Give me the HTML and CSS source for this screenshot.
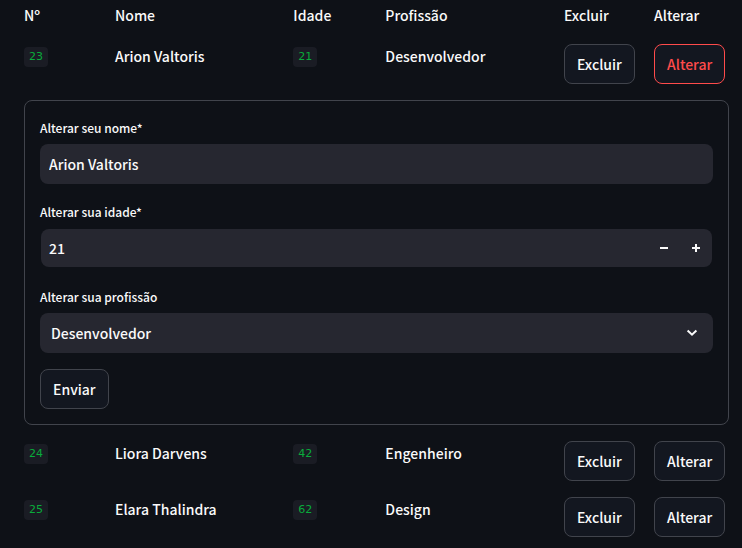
FILE: index.html
```html
<!DOCTYPE html>
<html lang="pt-BR">
<head>
<meta charset="utf-8">
<meta name="viewport" content="width=device-width, initial-scale=1">
<title>Cadastro</title>
<link rel="stylesheet" href="styles.css">
</head>
<body>
<main class="page">
  <table class="records">
    <colgroup>
      <col class="col-number"><col class="col-name"><col class="col-age"><col class="col-job"><col class="col-delete"><col class="col-edit">
    </colgroup>
    <thead>
      <tr><th>Nº</th><th>Nome</th><th>Idade</th><th>Profissão</th><th>Excluir</th><th>Alterar</th></tr>
    </thead>
    <tbody>
      <tr>
        <td><code class="badge">23</code></td><td>Arion Valtoris</td><td><code class="badge">21</code></td><td>Desenvolvedor</td>
        <td><button class="button" type="button">Excluir</button></td>
        <td><button class="button button-active" type="button">Alterar</button></td>
      </tr>
      <tr>
        <td colspan="6">
          <form class="editor">
            <div class="field">
              <label class="label" for="name">Alterar seu nome*</label>
              <input class="control" id="name" type="text" value="Arion Valtoris">
            </div>
            <div class="field">
              <label class="label" for="age">Alterar sua idade*</label>
              <div class="stepper">
                <input class="stepper-input" id="age" type="number" value="21">
                <button class="step" type="button" aria-label="Diminuir"><svg width="8" height="8" viewBox="0 0 8 8"><path d="M0 3h8v2H0z"/></svg></button>
                <button class="step" type="button" aria-label="Aumentar"><svg width="8" height="8" viewBox="0 0 8 8"><path d="M3 0h2v3h3v2H5v3H3V5H0V3h3z"/></svg></button>
              </div>
            </div>
            <div class="field">
              <label class="label" for="job">Alterar sua profissão</label>
              <div class="picker">
                <select class="control select" id="job">
                  <option selected>Desenvolvedor</option>
                  <option>Engenheiro</option>
                  <option>Design</option>
                </select>
                <svg class="chevron" width="12" height="8" viewBox="0 0 12 8" aria-hidden="true"><path d="M1.6 1.5 6 5.7l4.400-4.200"/></svg>
              </div>
            </div>
            <button class="button" type="submit">Enviar</button>
          </form>
        </td>
      </tr>
      <tr>
        <td><code class="badge">24</code></td><td>Liora Darvens</td><td><code class="badge">42</code></td><td>Engenheiro</td>
        <td><button class="button" type="button">Excluir</button></td>
        <td><button class="button" type="button">Alterar</button></td>
      </tr>
      <tr>
        <td><code class="badge">25</code></td><td>Elara Thalindra</td><td><code class="badge">62</code></td><td>Design</td>
        <td><button class="button" type="button">Excluir</button></td>
        <td><button class="button" type="button">Alterar</button></td>
      </tr>
    </tbody>
  </table>
</main>
</body>
</html>
```
FILE: styles.css
```css
* { box-sizing: border-box; }

body {
  margin: 0;
  background: #0e1117;
  color: #fafafa;
  font: 500 14px/24px "Noto Sans CJK SC", "Noto Sans", sans-serif;
}

button, input, select {
  font: inherit;
  color: inherit;
}

.page { padding: 3px 13px 0 24px; }

.records {
  width: 100%;
  table-layout: fixed;
  border-collapse: collapse;
}

.col-number { width: 91px; }
.col-name { width: 25.3%; }
.col-age { width: 92px; }
.col-job { width: auto; }
.col-delete { width: 90px; }
.col-edit { width: 75px; }

th, td {
  padding: 0 0 16px;
  text-align: left;
  vertical-align: top;
  font-weight: inherit;
  white-space: nowrap;
}

th { padding-bottom: 17px; }

.badge {
  display: block;
  width: fit-content;
  margin-top: 3px;
  padding: 0 5px;
  border-radius: 4px;
  background: #1a1c24;
  color: #09ab3b;
  font: 11px/20px "DejaVu Sans", monospace;
}

.button {
  display: block;
  height: 40px;
  padding: 0 12px;
  border: 1px solid #41444c;
  border-radius: 8px;
  background: #131720;
}

.button-active {
  border-color: #ff4b4b;
  color: #ff4b4b;
}

.editor {
  display: flex;
  flex-direction: column;
  align-items: stretch;
  gap: 16px;
  padding: 15px;
  border: 1px solid #41444c;
  border-radius: 8px;
}

.editor > .button { align-self: flex-start; }

.label {
  display: block;
  height: 28px;
  font-size: 12px;
}

.control {
  display: block;
  width: 100%;
  height: 40px;
  padding: 0 9px;
  border: 0;
  border-radius: 8px;
  background: #262730;
}

.stepper {
  display: flex;
  height: 38px;
  margin: 1px 1px 2px;
  border-radius: 8px;
  background: #262730;
}

.stepper-input {
  flex: 1;
  min-width: 0;
  padding: 0 8px;
  border: 0;
  background: none;
  appearance: textfield;
}

.stepper-input::-webkit-inner-spin-button { appearance: none; }

.step {
  display: grid;
  place-items: center;
  width: 32px;
  padding: 0;
  border: 0;
  background: none;
  fill: currentColor;
}

.picker { position: relative; }

.select {
  padding: 0 11px;
  appearance: none;
}

.chevron {
  position: absolute;
  top: 16px;
  right: 15px;
  fill: none;
  stroke: currentColor;
  stroke-width: 2;
  pointer-events: none;
}
```
